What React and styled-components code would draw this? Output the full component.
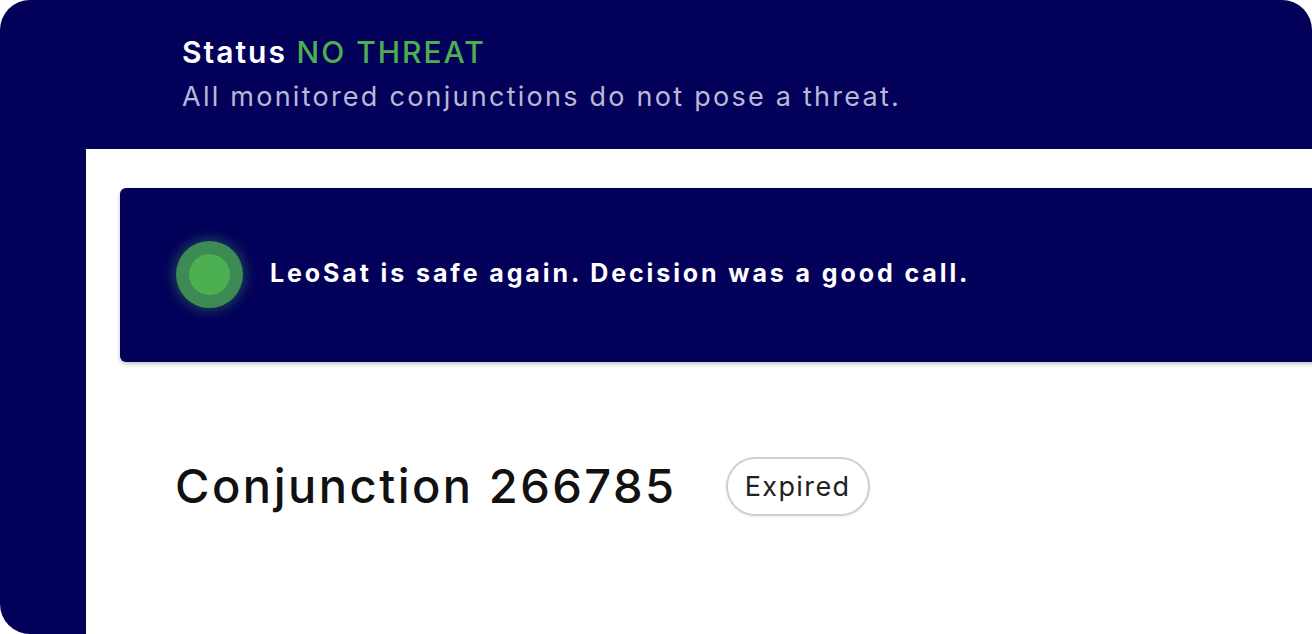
import React from "react";
import styled, { createGlobalStyle } from "styled-components";

const Global = createGlobalStyle`
  html, body { margin: 0; padding: 0; background: #ffffff; }
  body { font-family: "Inter", "Noto Sans", sans-serif; }
  #root { width: 1312px; height: 634px; overflow: hidden; }
`;

const Frame = styled.div`
  width: 1312px;
  height: 634px;
  background: #03005a;
  border-radius: 30px 30px 0 30px;
  display: flex;
  flex-direction: column;
  overflow: hidden;
`;

const Header = styled.header`
  height: 149px;
  box-sizing: border-box;
  padding: 33px 0 0 182px;
  display: flex;
  flex-direction: column;
  gap: 8px;
`;

const StatusLine = styled.div`
  font-size: 30px;
  font-weight: 600;
  color: #ffffff;
  line-height: 38px;
  letter-spacing: 2px;
`;

const Threat = styled.span`
  color: #4caf50;
  font-weight: 500;
`;

const Subtitle = styled.div`
  font-size: 27px;
  font-weight: 400;
  color: #b9b9d6;
  line-height: 36px;
  letter-spacing: 2.25px;
`;

const Body = styled.main`
  flex: 1;
  margin-left: 86px;
  background: #ffffff;
  padding: 39px 0 0 34px;
  display: flex;
  flex-direction: column;
`;

const Banner = styled.section`
  height: 174px;
  margin-right: -40px;
  background: #03005a;
  border-radius: 6px;
  box-shadow: 0 2px 4px rgba(0, 0, 0, 0.25);
  display: flex;
  align-items: center;
  padding-left: 56px;
  gap: 27px;
`;

const Dot = styled.div`
  width: 67px;
  height: 67px;
  border-radius: 50%;
  background: #3d8a55;
  box-shadow: 0 0 12px 3px rgba(76, 175, 80, 0.35);
  display: flex;
  align-items: center;
  justify-content: center;
  flex-shrink: 0;
  margin-top: -2px;
`;

const DotCore = styled.div`
  width: 41px;
  height: 41px;
  border-radius: 50%;
  background: #4caf50;
`;

const BannerText = styled.div`
  font-size: 25px;
  font-weight: 700;
  color: #ffffff;
  letter-spacing: 2.9px;
  margin-top: -4px;
`;

const TitleRow = styled.div`
  display: flex;
  align-items: center;
  gap: 49px;
  margin-top: 94px;
  padding-left: 55px;
`;

const Title = styled.h1`
  margin: 0;
  font-size: 47px;
  font-weight: 500;
  color: #111111;
  line-height: 60px;
  letter-spacing: 2.5px;
`;

const Pill = styled.span`
  display: inline-flex;
  align-items: center;
  justify-content: center;
  height: 59px;
  box-sizing: border-box;
  padding: 0 17px;
  border: 2px solid #cfcfcf;
  border-radius: 30px;
  font-size: 27px;
  color: #222222;
  letter-spacing: 1.4px;
  box-shadow: 0 1px 3px rgba(0, 0, 0, 0.08);
`;

export default function App() {
  return (
    <>
      <Global />
      <Frame>
        <Header>
          <StatusLine>
            Status <Threat>NO THREAT</Threat>
          </StatusLine>
          <Subtitle>All monitored conjunctions do not pose a threat.</Subtitle>
        </Header>
        <Body>
          <Banner>
            <Dot>
              <DotCore />
            </Dot>
            <BannerText>LeoSat is safe again. Decision was a good call.</BannerText>
          </Banner>
          <TitleRow>
            <Title>Conjunction 266785</Title>
            <Pill>Expired</Pill>
          </TitleRow>
        </Body>
      </Frame>
    </>
  );
}
